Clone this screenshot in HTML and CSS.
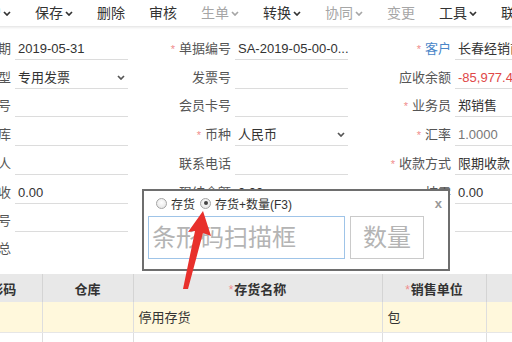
FILE: index.html
```html
<!DOCTYPE html>
<html>
<head>
    <title>销售发票</title>
    <link rel="stylesheet" href="styles.css">
</head>
<body>
    <div class="toolbar">
        <span class="tb-item">新增<svg class="chev" viewBox="0 0 8 5"><path d="M1 1l3 3 3-3"/></svg></span>
        <span class="tb-item">保存<svg class="chev" viewBox="0 0 8 5"><path d="M1 1l3 3 3-3"/></svg></span>
        <span class="tb-item">删除</span>
        <span class="tb-sep"></span>
        <span class="tb-item">审核</span>
        <span class="tb-sep"></span>
        <span class="tb-item off">生单<svg class="chev" viewBox="0 0 8 5"><path d="M1 1l3 3 3-3"/></svg></span>
        <span class="tb-item">转换<svg class="chev" viewBox="0 0 8 5"><path d="M1 1l3 3 3-3"/></svg></span>
        <span class="tb-item off">协同<svg class="chev" viewBox="0 0 8 5"><path d="M1 1l3 3 3-3"/></svg></span>
        <span class="tb-sep"></span>
        <span class="tb-item off">变更</span>
        <span class="tb-sep"></span>
        <span class="tb-item">工具<svg class="chev" viewBox="0 0 8 5"><path d="M1 1l3 3 3-3"/></svg></span>
        <span class="tb-item">联查</span>
    </div>

    <div class="form">
        <div class="frow">
            <div class="cell"><span class="lbl">单据日期</span><span class="fld">2019-05-31</span></div>
            <div class="cell"><span class="lbl"><i class="req">*</i>单据编号</span><span class="fld">SA-2019-05-00-0...</span></div>
            <div class="cell"><span class="lbl link"><i class="req">*</i>客户</span><span class="fld">长春经销商有限公司</span></div>
        </div>
        <div class="frow">
            <div class="cell"><span class="lbl">发票类型</span><span class="fld sel">专用发票<svg class="chev" viewBox="0 0 8 5"><path d="M1 1l3 3 3-3"/></svg></span></div>
            <div class="cell"><span class="lbl">发票号</span><span class="fld"></span></div>
            <div class="cell"><span class="lbl">应收余额</span><span class="fld neg">-85,977.40</span></div>
        </div>
        <div class="frow">
            <div class="cell"><span class="lbl">原单号</span><span class="fld"></span></div>
            <div class="cell"><span class="lbl">会员卡号</span><span class="fld"></span></div>
            <div class="cell"><span class="lbl"><i class="req">*</i>业务员</span><span class="fld">郑销售</span></div>
        </div>
        <div class="frow">
            <div class="cell"><span class="lbl">仓库</span><span class="fld"></span></div>
            <div class="cell"><span class="lbl"><i class="req">*</i>币种</span><span class="fld sel">人民币<svg class="chev" viewBox="0 0 8 5"><path d="M1 1l3 3 3-3"/></svg></span></div>
            <div class="cell"><span class="lbl"><i class="req">*</i>汇率</span><span class="fld dim">1.0000</span></div>
        </div>
        <div class="frow">
            <div class="cell"><span class="lbl">经手人</span><span class="fld"></span></div>
            <div class="cell"><span class="lbl">联系电话</span><span class="fld"></span></div>
            <div class="cell"><span class="lbl"><i class="req">*</i>收款方式</span><span class="fld">限期收款</span></div>
        </div>
        <div class="frow">
            <div class="cell"><span class="lbl">现收</span><span class="fld">0.00</span></div>
            <div class="cell"><span class="lbl">现结余额</span><span class="fld">0.00</span></div>
            <div class="cell"><span class="lbl">抹零</span><span class="fld">0.00</span></div>
        </div>
        <div class="frow">
            <div class="cell"><span class="lbl">订单号</span><span class="fld"></span></div>
            <div class="cell"><span class="lbl">备注</span><span class="fld"></span></div>
            <div class="cell"><span class="lbl"></span><span class="fld"></span></div>
        </div>
        <div class="frow">
            <div class="cell"><span class="lbl">汇总</span><span class="fld none"></span></div>
            <div class="cell"><span class="lbl"></span><span class="fld none"></span></div>
            <div class="cell"><span class="lbl"></span><span class="fld none"></span></div>
        </div>
    </div>

    <table class="grid">
        <colgroup>
            <col style="width: 90px">
            <col style="width: 91px">
            <col style="width: 249px">
            <col style="width: 104px">
            <col style="width: 114px">
        </colgroup>
        <thead>
            <tr><th>条形码</th><th>仓库</th><th><i class="req">*</i>存货名称</th><th><i class="req">*</i>销售单位</th><th>数量</th></tr>
        </thead>
        <tbody>
            <tr class="cur"><td></td><td></td><td>停用存货</td><td>包</td><td></td></tr>
            <tr><td></td><td></td><td></td><td></td><td></td></tr>
        </tbody>
    </table>

    <div class="scan">
        <div class="scan-top">
            <span class="radio"></span><span class="opt">存货</span>
            <span class="radio on"></span><span class="opt">存货+数量(F3)</span>
            <span class="close">x</span>
        </div>
        <div class="scan-body">
            <input class="scan-code" type="text" placeholder="条形码扫描框">
            <input class="scan-qty" type="text" placeholder="数量">
        </div>
    </div>

    <svg class="pointer" viewBox="0 0 512 342">
        <polygon points="203,211 211,236 203,233 188,289 183,289 195,231 188,232"/>
    </svg>
</body>
</html>
```

FILE: styles.css
```css
* {
    box-sizing: border-box;
}
body {
    margin: 0;
    width: 512px;
    height: 342px;
    overflow: hidden;
    position: relative;
    background: #fff;
    font-family: "Liberation Sans", "Noto Sans CJK SC", sans-serif;
    font-size: 13px;
    color: #333;
}
.chev {
    width: 8px;
    height: 5px;
    fill: none;
    stroke: currentColor;
    stroke-width: 1.7;
}

/* toolbar */
.toolbar {
    display: flex;
    align-items: center;
    height: 26px;
    margin-left: -39px;
    background: #fff;
    box-shadow: 0 1px 3px rgba(0, 0, 0, 0.14);
    position: relative;
    white-space: nowrap;
}
.tb-item {
    display: flex;
    align-items: center;
    gap: 2px;
    padding: 0 12px;
    font-size: 14px;
    line-height: 26px;
    color: #333;
}
.tb-item.off {
    color: #a6a6a6;
}
.tb-sep {
    width: 1px;
    height: 15px;
    background: #e0e0e0;
}

/* header form */
.form {
    display: flex;
    flex-direction: column;
    gap: 5px;
    padding-top: 11px;
    margin-left: -92px;
}
.frow {
    display: flex;
}
.cell {
    display: flex;
    width: 220px;
}
.lbl {
    width: 103px;
    margin-right: 4px;
    text-align: right;
    white-space: nowrap;
    line-height: 23px;
    color: #555;
}
.lbl.link {
    color: #4a86c8;
}
.req {
    font-style: normal;
    color: #f08c8c;
    font-size: 11px;
    margin-right: 4px;
}
.fld {
    display: flex;
    align-items: center;
    justify-content: space-between;
    width: 113px;
    height: 23px;
    padding: 1px 3px 0 3px;
    border-bottom: 1px solid #dcdcdc;
    white-space: nowrap;
    overflow: hidden;
    line-height: 22px;
    color: #333;
}
.fld.sel .chev {
    color: #555;
}
.fld.neg {
    color: #e04848;
}
.fld.dim {
    color: #777;
}
.fld.none {
    border-bottom-color: transparent;
}

/* detail grid */
.grid {
    margin-top: 14px;
    margin-left: -48px;
    width: 648px;
    table-layout: fixed;
    border-collapse: collapse;
}
.grid th {
    height: 28px;
    background: #e8e8e8;
    border-right: 1px solid #d4d4d4;
    font-weight: bold;
    color: #333;
    text-align: center;
    white-space: nowrap;
    padding: 0;
}
.grid th .req {
    font-size: 12px;
    margin-right: 1px;
    font-weight: normal;
}
.grid td {
    height: 30px;
    padding: 0 5px;
    border-right: 1px solid #dedede;
    border-bottom: 1px solid #e6e6e6;
    color: #333;
}
.grid tr.cur td {
    background: #fff8dc;
}

/* barcode scan popup */
.scan {
    position: absolute;
    left: 142px;
    top: 189px;
    width: 308px;
    height: 82px;
    background: #fff;
    border: 2px solid #6e6e6e;
    padding: 0 4px;
    z-index: 3;
}
.scan-top {
    display: flex;
    align-items: center;
    height: 24px;
    padding-left: 8px;
    font-size: 12px;
    color: #333;
}
.radio {
    width: 11px;
    height: 11px;
    border-radius: 50%;
    border: 1px solid #a5a5a5;
    background: radial-gradient(circle at 50% 40%, #fff 0, #e0e0e0 100%);
    margin-right: 4px;
    position: relative;
}
.radio.on::after {
    content: "";
    position: absolute;
    left: 2.5px;
    top: 2.5px;
    width: 4px;
    height: 4px;
    border-radius: 50%;
    background: #444;
}
.opt {
    margin-right: 5px;
}
.close {
    margin-left: auto;
    margin-right: 2px;
    color: #999;
    font-weight: bold;
    font-size: 13px;
}
.scan-body {
    display: flex;
    gap: 5px;
    margin-top: 1px;
}
.scan-code,
.scan-qty {
    height: 43px;
    margin: 0;
    font-family: "Liberation Sans", "Noto Sans CJK SC", sans-serif;
    font-size: 24px;
    outline: none;
    background: #fff;
}
.scan-code {
    width: 197px;
    border: 1px solid #9fc4e8;
    padding: 0 3px;
}
.scan-qty {
    width: 74px;
    border: 1px solid #cacaca;
    padding: 0;
    text-align: center;
}
.scan-code::placeholder,
.scan-qty::placeholder {
    color: #b4b4b4;
}

.pointer {
    position: absolute;
    left: 0;
    top: 0;
    width: 512px;
    height: 342px;
    pointer-events: none;
    z-index: 5;
    fill: #e8302c;
}
```
